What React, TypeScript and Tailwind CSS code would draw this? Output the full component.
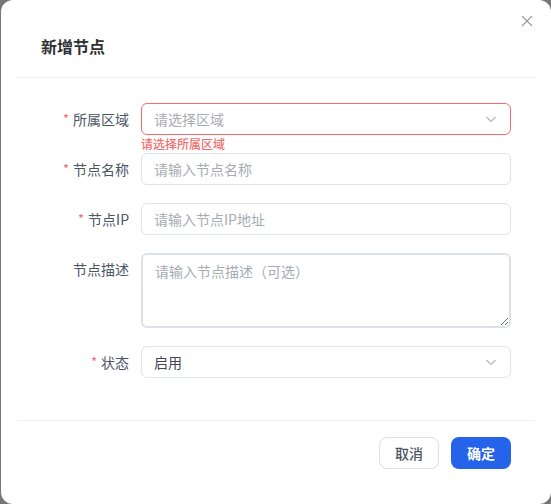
import { useState } from "react"

const font = {
	fontFamily: '"Noto Sans CJK SC", "Noto Sans", sans-serif',
}

function Chevron() {
	return (
		<svg width="14" height="14" viewBox="0 0 14 14" className="text-[#b1b4bb]">
			<polyline
				points="2.5,5 7,9.5 11.5,5"
				fill="none"
				stroke="currentColor"
				strokeWidth="1.1"
			/>
		</svg>
	)
}

function Label({ text, required }: { text: string; required?: boolean }) {
	return (
		<label className="w-[100px] shrink-0 pr-3 h-8 flex items-center justify-end text-sm text-[#4b5563]">
			{required && <span className="text-[#f56c6c] mr-1 text-[13px]">*</span>}
			{text}
		</label>
	)
}

export default function App() {
	const [status] = useState("启用")

	return (
		<div className="w-[551px] h-[504px] bg-[#767676] pl-px" style={font}>
			<div className="w-[550px] h-[504px] bg-white rounded-xl flex flex-col relative">
				<button className="absolute right-[18px] top-[15px] text-[#9a9ca3]" aria-label="close">
					<svg width="12" height="12" viewBox="0 0 12 12">
						<path d="M1 1L11 11M11 1L1 11" stroke="currentColor" strokeWidth="1.2" />
					</svg>
				</button>

				<div className="mx-4 px-6 h-[78px] pt-[34px] border-b border-[#eef0f3]">
					<h2 className="text-base font-bold text-[#303133] leading-6">新增节点</h2>
				</div>

				<form className="mx-4 px-6 pt-[25px] pb-6 flex flex-col gap-[18px]" noValidate>
					<div className="flex">
						<Label text="所属区域" required />
						<div className="flex-1 relative">
							<div className="h-8 rounded-md border border-[#f56c6c] px-3 flex items-center justify-between">
								<span className="text-sm text-[#a8abb2]">请选择区域</span>
								<Chevron />
							</div>
							<p className="absolute left-0 top-full pt-[2px] text-xs leading-[14px] font-medium text-[#f56c6c]">
								请选择所属区域
							</p>
						</div>
					</div>

					<div className="flex">
						<Label text="节点名称" required />
						<input
							placeholder="请输入节点名称"
							className="flex-1 h-8 rounded-md border border-[#dfe3ea] px-3 text-sm placeholder:text-[#a8abb2] outline-none"
						/>
					</div>

					<div className="flex">
						<Label text="节点IP" required />
						<input
							placeholder="请输入节点IP地址"
							className="flex-1 h-8 rounded-md border border-[#dfe3ea] px-3 text-sm placeholder:text-[#a8abb2] outline-none"
						/>
					</div>

					<div className="flex">
						<Label text="节点描述" />
						<textarea
							placeholder="请输入节点描述（可选）"
							className="flex-1 h-[75px] rounded-md border-2 border-[#dde1e8] px-3 py-[4px] text-sm leading-6 placeholder:text-[#a8abb2] outline-none resize-y"
						/>
					</div>

					<div className="flex">
						<Label text="状态" required />
						<div className="flex-1 h-8 rounded-md border border-[#dfe3ea] px-3 flex items-center justify-between">
							<span className="text-sm text-[#3f4551]">{status}</span>
							<Chevron />
						</div>
					</div>
				</form>

				<div className="mx-4 px-6 mt-[18px] pt-4 border-t border-[#eef0f3] flex justify-end gap-3">
					<button
						type="button"
						className="w-[60px] h-8 rounded-lg border border-[#dcdfe6] text-sm font-medium text-[#4b5563] bg-white"
					>
						取消
					</button>
					<button
						type="button"
						className="w-[60px] h-8 rounded-lg bg-[#2563eb] text-sm font-bold text-white"
					>
						确定
					</button>
				</div>
			</div>
		</div>
	)
}
